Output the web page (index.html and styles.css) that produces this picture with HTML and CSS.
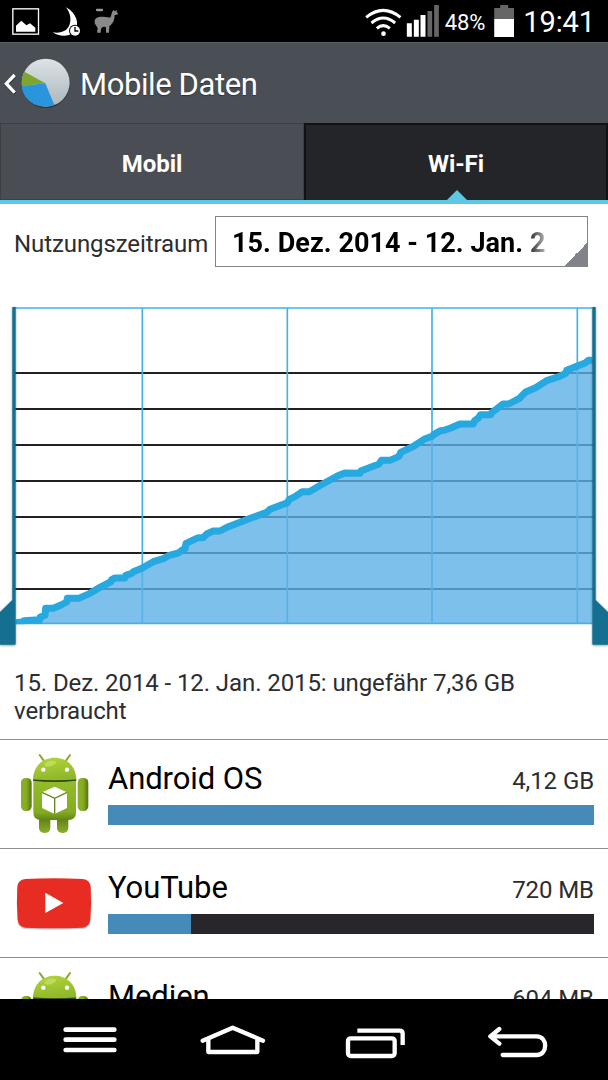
FILE: index.html
```html
<!DOCTYPE html>
<html lang="de">
    <head>
        <meta charset="utf-8">
        <title>Mobile Daten</title>
        <link rel="stylesheet" href="styles.css">
    </head>
    <body>
        <svg width="0" height="0" class="defs">
            <defs>
                <linearGradient id="headGreen" x1="0" y1="0" x2="0.3" y2="1">
                    <stop offset="0" stop-color="#b4d63a"/><stop offset="1" stop-color="#8fb82a"/>
                </linearGradient>
                <linearGradient id="bodyGreen" x1="0" y1="0" x2="0" y2="1">
                    <stop offset="0" stop-color="#93bd2b"/><stop offset="0.8" stop-color="#84ac22"/><stop offset="1" stop-color="#628416"/>
                </linearGradient>
                <linearGradient id="limbGreen" x1="0" y1="0" x2="1" y2="0">
                    <stop offset="0" stop-color="#8bb02d"/><stop offset="0.5" stop-color="#85ad22"/><stop offset="1" stop-color="#56730f"/>
                </linearGradient>
                <linearGradient id="legGreen" x1="0" y1="0" x2="0" y2="1">
                    <stop offset="0" stop-color="#56730f"/><stop offset="1" stop-color="#8bb02d"/>
                </linearGradient>
                <symbol id="android" viewBox="0 0 330 330">
                    <path d="M119 45l12 17M210 45l-12 17" stroke="#8aa82f" stroke-width="6" stroke-linecap="round"/>
                    <rect x="117" y="225" width="34" height="54" rx="15" fill="url(#legGreen)"/>
                    <rect x="171" y="225" width="34" height="54" rx="15" fill="url(#legGreen)"/>
                    <rect x="63" y="114" width="32" height="99" rx="14" fill="url(#limbGreen)"/>
                    <rect x="233" y="114" width="32" height="99" rx="14" fill="url(#limbGreen)"/>
                    <path d="M100 119h128v98q0 23-23 23h-82q-23 0-23-23z" fill="url(#bodyGreen)"/>
                    <path d="M99 118h130v4q-65 8-130 0z" fill="#344707"/>
                    <path d="M99 117C101 76 130 53 164 53s63 23 65 64q-65 8-130 0z" fill="url(#headGreen)"/>
                    <ellipse cx="151" cy="71" rx="18" ry="8" fill="#cfe27a" opacity=".6" transform="rotate(-16 151 71)"/>
                    <circle cx="130" cy="89" r="6.5" fill="#fff"/>
                    <circle cx="201" cy="89" r="6.5" fill="#fff"/>
                    <path d="M164 140l37 17v47l-37 18-38-18v-47z" fill="#fff"/>
                    <path d="M126 157l38 18 37-18M164 175v47" fill="none" stroke="#65861a" stroke-width="4"/>
                </symbol>
            </defs>
        </svg>

        <div class="statusbar">
            <svg class="notifications" viewBox="0 0 375 126" width="125" height="42">
                <rect x="38.500" y="26.500" width="77" height="76" fill="none" stroke="#fff" stroke-width="4"/>
                <path d="M48 95V77l16-15 15 14 11-6 16 13v12z" fill="#fff"/>
                <path d="M198 22c31 17 43 50 25 72-15 18-45 17-65 3 27 4 45-5 51-24 5-16 2-34-11-51z" fill="#fff"/>
                <circle cx="225" cy="92" r="18" fill="#000"/>
                <circle cx="225" cy="92" r="15" fill="#fff"/>
                <path d="M225 81v12h10" fill="none" stroke="#000" stroke-width="4"/>
                <path d="M291 30h15" stroke="#999" stroke-width="7" stroke-linecap="round"/>
                <path d="M336 37L340 30 344 34 350 30 350 36 354 40 352 44 344 45C344 58 340 68 333 74L328 79 327 98H318L318 82 313 80 309 81 305 83 303 88 302 98H291L293 85 288 76 285 72C281 60 288 52 298 51 309 49 326 54 332 52Z" fill="#8a8a8a"/>
            </svg>
            <div class="sysinfo">
                <svg viewBox="0 0 230 126" width="77" height="42">
                    <g fill="none" stroke="#fff" stroke-width="9">
                        <path d="M6 52Q57 10 109 52"/>
                        <path d="M22 69Q57 39 93 69"/>
                        <path d="M38 85Q57 69 77 85"/>
                    </g>
                    <circle cx="58" cy="101" r="7" fill="#fff"/>
                    <path d="M128 70h15v40h-15zM149 59h15v51h-15zM169 45h15v65h-15z" fill="#fff"/>
                    <path d="M190 33h14v77h-14zM210 15h14v95h-14z" fill="#666"/>
                </svg>
                <span class="percent">48%</span>
                <div class="battery"></div>
                <span class="clock">19:41</span>
            </div>
        </div>

        <div class="header">
            <svg viewBox="0 0 213 243" width="71" height="81">
                <path d="M45 97L19 124l26 27" fill="none" stroke="#25282c" stroke-width="12"/>
                <path d="M44 96L19 122l25 27" fill="none" stroke="#fff" stroke-width="10"/>
                <defs>
                    <linearGradient id="pie" x1="0" y1="0" x2="0" y2="1">
                        <stop offset="0" stop-color="#dde3e7"/><stop offset="1" stop-color="#abb7bb"/>
                    </linearGradient>
                </defs>
                <circle cx="137" cy="122" r="73" fill="#33373c"/>
                <circle cx="137" cy="119" r="72" fill="url(#pie)"/>
                <path d="M136 121L73 86Q65 102 65 129z" fill="#7ca62c"/>
                <path d="M136 121L65 129c3 38 35 62 72 62 9 0 17-1 26-5z" fill="#2a94dc"/>
            </svg>
            <h1>Mobile Daten</h1>
        </div>

        <div class="tabs">
            <div class="tab">Mobil</div>
            <div class="tab active">Wi-Fi</div>
        </div>

        <div class="content">
            <div class="period">
                <label>Nutzungszeitraum</label>
                <div class="spinner"><span>15. Dez. 2014 - 12. Jan. 2</span></div>
            </div>

            <svg class="chart" viewBox="0 0 1824 1080" width="608" height="360">
                <clipPath id="plot"><path d="M44 51H1780V1003H44z"/></clipPath>
                <path class="rules" d="M44 249H1778M44 357H1778M44 465H1778M44 573H1778M44 681H1778M44 789H1778M44 897H1778"/>
                <path class="grid" d="M44 54H1778M427 54V1000M862 54V1000M1296 54V1000M1732 54V1000M44 1000H1778"/>
                <path class="area" d="M48 998L66 996 72 992 105 990 118 992 120 982 135 976 137 955 160 955 183 945 200 936 202 925 236 925 270 910 300 892 333 875 335 869 345 864 375 864 377 856 395 850 400 845 427 834 460 815 490 806 505 797 535 789 548 779 555 777 558 760 595 743 610 743 620 732 640 723 660 723 685 710 745 687 800 667 810 658 862 638 868 628 885 620 907 605 928 605 957 588 1012 558 1034 549 1080 550 1082 543 1137 522 1144 511 1170 511 1197 499 1202 487 1242 468 1272 448 1296 439 1302 433 1322 422 1332 421 1352 414 1380 402 1420 402 1424 392 1434 385 1442 374 1472 374 1475 368 1509 342 1526 342 1557 326 1577 306 1607 293 1642 271 1677 260 1697 250 1700 241 1757 218 1765 211 1778 211V1000H48z"/>
                <path class="line" clip-path="url(#plot)" d="M48 998L66 996 72 992 105 990 118 992 120 982 135 976 137 955 160 955 183 945 200 936 202 925 236 925 270 910 300 892 333 875 335 869 345 864 375 864 377 856 395 850 400 845 427 834 460 815 490 806 505 797 535 789 548 779 555 777 558 760 595 743 610 743 620 732 640 723 660 723 685 710 745 687 800 667 810 658 862 638 868 628 885 620 907 605 928 605 957 588 1012 558 1034 549 1080 550 1082 543 1137 522 1144 511 1170 511 1197 499 1202 487 1242 468 1272 448 1296 439 1302 433 1322 422 1332 421 1352 414 1380 402 1420 402 1424 392 1434 385 1442 374 1472 374 1475 368 1509 342 1526 342 1557 326 1577 306 1607 293 1642 271 1677 260 1697 250 1700 241 1757 218 1765 211 1778 211"/>
                <path class="sweep" d="M37 51h10v1010q0 3-3 3H0V966l37-36z"/>
                <path class="sweep" d="M1777 51h10v879l37 36v98h-44q-3 0-3-3z"/>
            </svg>

            <p class="summary">15. Dez. 2014 - 12. Jan. 2015: ungefähr 7,36 GB verbraucht</p>

            <div class="app">
                <svg class="icon" width="110" height="110"><use href="#android"/></svg>
                <div class="info">
                    <div class="row"><span class="name">Android OS</span><span class="usage">4,12 GB</span></div>
                    <div class="bar"><div class="fill" style="width: 100%"></div></div>
                </div>
            </div>
            <div class="app">
                <svg class="icon" viewBox="0 0 330 330" width="110" height="110">
                    <path d="M76 93Q162 87 248 93 272 95 273 118 276 163 272 214 270 238 248 240 162 245 76 240 54 238 52 214 49 163 52 118 53 95 76 93z" fill="#c3cdd3"/>
                    <path d="M76 90Q162 85 248 90 271 92 272 115 275 161 271 210 269 234 248 236 162 240 76 236 55 234 53 210 49 161 52 115 53 92 76 90z" fill="#e72d23"/>
                    <path d="M136 131l54 31-54 30z" fill="#fff"/>
                </svg>
                <div class="info">
                    <div class="row"><span class="name">YouTube</span><span class="usage">720 MB</span></div>
                    <div class="bar"><div class="fill" style="width: 17%"></div></div>
                </div>
            </div>
            <div class="app">
                <svg class="icon" width="110" height="110"><use href="#android"/></svg>
                <div class="info">
                    <div class="row"><span class="name">Medien</span><span class="usage">604 MB</span></div>
                    <div class="bar"><div class="fill" style="width: 14%"></div></div>
                </div>
            </div>
        </div>

        <div class="navbar">
            <svg viewBox="0 0 1824 243" width="608" height="81" fill="none" stroke="#fff" stroke-width="13" stroke-linejoin="round" stroke-linecap="round">
                <path d="M197 92H343M197 122H343M197 153H343" stroke-width="14"/>
                <path d="M625 122v37H772v-37M608 125L698 86 789 125" stroke-width="13"/>
                <rect x="1044" y="118" width="140" height="53" rx="8"/>
                <path d="M1072 95H1199Q1208 95 1208 104V138" stroke-linecap="butt"/>
                <path d="M1508 168H1610C1644 168 1644 112 1610 112H1473M1498 90L1471 112 1498 134"/>
            </svg>
        </div>
    </body>
</html>
```
FILE: styles.css
```css
*{
    box-sizing: border-box;
}
body{
    margin: 0;
    width: 608px;
    height: 1080px;
    overflow: hidden;
    display: flex;
    flex-direction: column;
    background-color: white;
    color: #2b2d30;
    font-family: Roboto, sans-serif;
    font-size: 24px;
    letter-spacing: -0.09px;
}
svg{
    display: block;
    flex: none;
}
.defs{
    position: absolute;
}

.statusbar{
    flex: none;
    height: 42px;
    display: flex;
    justify-content: space-between;
    background-color: black;
    color: white;
}
.sysinfo{
    display: flex;
    align-items: center;
    padding-right: 13px;
}
.percent{
    font-size: 22px;
    margin-left: 4px;
    padding-top: 2px;
}
.battery{
    width: 20px;
    height: 32px;
    margin: 0 9px 0 9px;
    background: linear-gradient(#666 14px, white 14px);
    clip-path: polygon(6px 0, 14px 0, 14px 3px, 100% 3px, 100% 100%, 0 100%, 0 3px, 6px 3px);
}
.clock{
    font-size: 29px;
    padding-top: 2px;
}

.header{
    flex: none;
    height: 81px;
    display: flex;
    align-items: center;
    background-color: #4a4e55;
    border-top: 1px solid #5c6064;
    color: white;
}
.header h1{
    margin: 0 0 0 9px;
    padding-top: 2px;
    font-size: 31px;
    font-weight: normal;
    letter-spacing: -0.4px;
    text-shadow: 0 1px 1px #333;
}

.tabs{
    flex: none;
    height: 81px;
    display: flex;
    border-bottom: 4px solid #5bc9e5;
}
.tab{
    position: relative;
    width: 304px;
    padding-top: 4px;
    display: flex;
    align-items: center;
    justify-content: center;
    background-color: #4a4d54;
    border: 1px solid #3c3f44;
    color: white;
    font-size: 24px;
    font-weight: bold;
}
.tab.active{
    padding-top: 2px;
    background-color: #242529;
    border: 2px solid #111215;
    border-bottom: none;
}
.tab.active::after{
    content: "";
    position: absolute;
    bottom: 0;
    left: 141px;
    border: 10px solid transparent;
    border-top: none;
    border-bottom-color: #5bc9e5;
}

.content{
    flex: 1;
    min-height: 0;
    overflow: hidden;
}
.period{
    height: 86px;
    padding: 12px 20px 0 14px;
    display: flex;
    justify-content: space-between;
}
.period label{
    line-height: 56px;
}
.spinner{
    width: 373px;
    height: 51px;
    padding-left: 16px;
    border: 1px solid #818488;
    background: linear-gradient(135deg, transparent 50%, #808388 50%) right bottom / 23px 23px no-repeat;
    color: black;
    font-size: 27px;
    font-weight: bold;
    letter-spacing: 0.05px;
    line-height: 52px;
    white-space: nowrap;
}
.spinner span{
    background: linear-gradient(to right, black calc(100% - 20px), #b0b4b8);
    background-clip: text;
    color: transparent;
}
.chart .rules{
    fill: none;
    stroke: #222022;
    stroke-width: 6;
}
.chart .grid{
    fill: none;
    stroke: #42b2e2;
    stroke-width: 5;
}
.chart .area{
    fill: rgba(92, 176, 230, 0.8);
}
.chart .line{
    fill: none;
    stroke: #25a9e0;
    stroke-width: 21;
    stroke-linejoin: round;
}
.chart .sweep{
    fill: #146f91;
    filter: drop-shadow(0 2px 3px rgba(20, 80, 110, 0.6));
}
.summary{
    height: 89px;
    margin: 0;
    padding: 19px 60px 0 14px;
    line-height: 28px;
}

.app{
    height: 109px;
    display: flex;
    border-top: 1px solid #8c8e91;
}
.icon{
    margin: 0 -2px 0 0;
}
.info{
    width: 486px;
}
.row{
    display: flex;
    justify-content: space-between;
    align-items: baseline;
    height: 65px;
    padding-top: 20px;
}
.name{
    color: black;
    font-size: 31px;
}
.bar{
    height: 20px;
    background-color: #28262c;
}
.fill{
    height: 20px;
    background-color: #458ab8;
}

.navbar{
    flex: none;
    height: 81px;
    background-color: black;
}
```
